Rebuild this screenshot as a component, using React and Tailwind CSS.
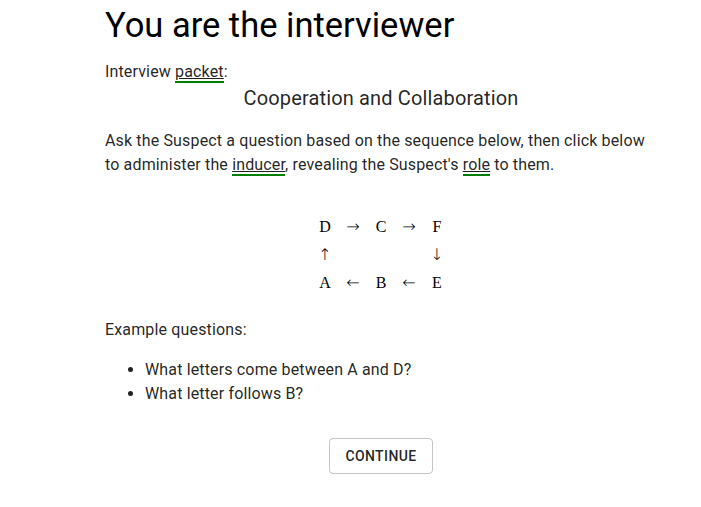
import React from 'react';

const Term = ({ children }) => (
  <span className="underline decoration-1 border-b-2 border-[#008000]">
    {children}
  </span>
);

const rows = [
  ['D', '→', 'C', '→', 'F'],
  ['↑', '', '', '', '↓'],
  ['A', '←', 'B', '←', 'E'],
];

const isArrow = (c) => c !== '' && '→←↑↓'.includes(c);

const App = () => {
  return (
    <div className="min-h-screen bg-white text-[rgba(0,0,0,0.87)] font-['Roboto',sans-serif]">
      <div className="ml-[105px] w-[552px]">
        <h1 className="pt-[4px] text-[34.5px] leading-[1.235] text-black">You are the interviewer</h1>
        <p className="mt-[13px] text-base leading-6 tracking-[0.15px]">
          Interview <Term>packet</Term>:
        </p>
        <h2 className="-mt-[2px] text-center text-[20px] leading-[1.6] tracking-[0.15px]">Cooperation and Collaboration</h2>
        <p className="mt-[15px] text-base leading-6 tracking-[0.15px]">
          Ask the Suspect a question based on the sequence below, then click below to administer the{' '}
          <Term>inducer</Term>, revealing the Suspect's <Term>role</Term> to them.
        </p>
        <div className="mt-[36px] flex justify-center">
          <div className="grid grid-cols-[repeat(5,28px)] font-['Liberation_Serif',serif] text-[16px] leading-[28px] text-black">
            {rows.flat().map((c, i) => (
              <span
                key={i}
                className={
                  isArrow(c)
                    ? "text-center font-['DejaVu_Sans',sans-serif] text-[16px] font-light"
                    : 'text-center'
                }
              >
                {c}
              </span>
            ))}
          </div>
        </div>
        <p className="mt-[21px] text-base leading-6 tracking-[0.15px]">Example questions:</p>
        <ul className="mt-[16px] list-disc pl-10 text-base leading-6 tracking-[0.15px]">
          <li>What letters come between A and D?</li>
          <li>What letter follows B?</li>
        </ul>
        <div className="mt-[32px] flex justify-center">
          <button
            type="button"
            className="rounded border border-[rgba(0,0,0,0.23)] px-[15px] py-[5px] text-sm font-medium uppercase leading-[1.75] tracking-[0.4px]"
          >
            Continue
          </button>
        </div>
      </div>
    </div>
  );
};

export default App;
